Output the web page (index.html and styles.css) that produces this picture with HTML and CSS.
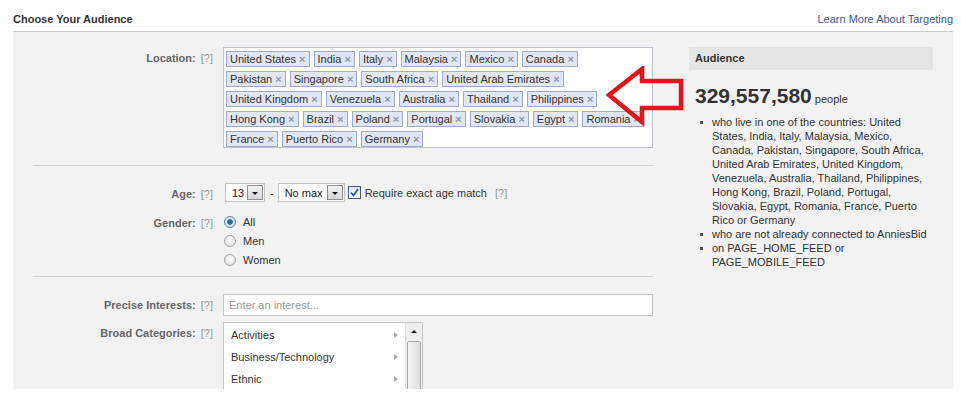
FILE: index.html
```html
<!DOCTYPE html>
<html lang="en">
<head>
  <meta charset="UTF-8" />
  <title>Choose Your Audience</title>
  <link rel="stylesheet" href="styles.css">
</head>
<body>
  <div class="page">
    <div class="title-bar">
      <h2>Choose Your Audience</h2>
      <a class="learn-link" href="#">Learn More About Targeting</a>
    </div>

    <div class="panel">
      <div class="form-col">
        <div class="row">
          <div class="label label-top">Location: <span class="help">[?]</span></div>
          <div class="token-box">
            <div class="tag-row">
              <span class="tag">United States <i>&#215;</i></span>
              <span class="tag">India <i>&#215;</i></span>
              <span class="tag">Italy <i>&#215;</i></span>
              <span class="tag">Malaysia <i>&#215;</i></span>
              <span class="tag">Mexico <i>&#215;</i></span>
              <span class="tag">Canada <i>&#215;</i></span>
            </div>
            <div class="tag-row">
              <span class="tag">Pakistan <i>&#215;</i></span>
              <span class="tag">Singapore <i>&#215;</i></span>
              <span class="tag">South Africa <i>&#215;</i></span>
              <span class="tag">United Arab Emirates <i>&#215;</i></span>
            </div>
            <div class="tag-row">
              <span class="tag">United Kingdom <i>&#215;</i></span>
              <span class="tag">Venezuela <i>&#215;</i></span>
              <span class="tag">Australia <i>&#215;</i></span>
              <span class="tag">Thailand <i>&#215;</i></span>
              <span class="tag">Philippines <i>&#215;</i></span>
            </div>
            <div class="tag-row">
              <span class="tag">Hong Kong <i>&#215;</i></span>
              <span class="tag">Brazil <i>&#215;</i></span>
              <span class="tag">Poland <i>&#215;</i></span>
              <span class="tag">Portugal <i>&#215;</i></span>
              <span class="tag">Slovakia <i>&#215;</i></span>
              <span class="tag">Egypt <i>&#215;</i></span>
              <span class="tag">Romania <i>&#215;</i></span>
            </div>
            <div class="tag-row">
              <span class="tag">France <i>&#215;</i></span>
              <span class="tag">Puerto Rico <i>&#215;</i></span>
              <span class="tag">Germany <i>&#215;</i></span>
            </div>
          </div>
        </div>

        <div class="divider"></div>

        <div class="row row-age">
          <div class="label">Age: <span class="help">[?]</span></div>
          <div class="age-controls">
            <span class="select select-min">13 <b class="drop"></b></span>
            <span class="dash">-</span>
            <span class="select select-max">No max <b class="drop"></b></span>
            <span class="checkbox">
              <svg width="9" height="9" viewBox="0 0 9 9"><path d="M1 4.5 L3.5 7.5 L8 1" fill="none" stroke="#2a5db0" stroke-width="1.8"/></svg>
            </span>
            <span class="check-text">Require exact age match</span>
            <span class="help help-inline">[?]</span>
          </div>
        </div>

        <div class="row row-gender">
          <div class="label">Gender: <span class="help">[?]</span></div>
          <div class="radios">
            <div class="radio-line"><span class="radio checked"></span>All</div>
            <div class="radio-line"><span class="radio"></span>Men</div>
            <div class="radio-line"><span class="radio"></span>Women</div>
          </div>
        </div>

        <div class="divider divider-low"></div>

        <div class="row row-interest">
          <div class="label">Precise Interests: <span class="help">[?]</span></div>
          <div class="text-input">Enter an interest...</div>
        </div>

        <div class="row row-broad">
          <div class="label">Broad Categories: <span class="help">[?]</span></div>
          <div class="listbox">
            <div class="list-items">
              <div class="list-item">Activities <span class="caret"></span></div>
              <div class="list-item">Business/Technology <span class="caret"></span></div>
              <div class="list-item">Ethnic <span class="caret"></span></div>
            </div>
            <div class="scrollbar">
              <div class="scroll-up"></div>
              <div class="scroll-thumb"></div>
            </div>
          </div>
        </div>
      </div>

      <div class="side-col">
        <div class="side-head">Audience</div>
        <div class="count"><strong>329,557,580</strong> people</div>
        <ul class="criteria">
          <li>who live in one of the countries: United States, India, Italy, Malaysia, Mexico, Canada, Pakistan, Singapore, South Africa, United Arab Emirates, United Kingdom, Venezuela, Australia, Thailand, Philippines, Hong Kong, Brazil, Poland, Portugal, Slovakia, Egypt, Romania, France, Puerto Rico or Germany</li>
          <li>who are not already connected to AnniesBid</li>
          <li>on PAGE_HOME_FEED or PAGE_MOBILE_FEED</li>
        </ul>
      </div>

      <svg class="red-arrow" width="80" height="62" viewBox="0 0 80 62">
        <polygon points="3,29 36,3 36,15 75,15 75,42 36,42 36,56" fill="none" stroke="#e3141b" stroke-width="4.5" stroke-linejoin="miter"/>
      </svg>
    </div>
  </div>
</body>
</html>
```

FILE: styles.css
```css
* {
  box-sizing: border-box;
  margin: 0;
  padding: 0;
}

body {
  background: #fff;
  font-family: "Liberation Sans", Arial, sans-serif;
  font-size: 11px;
  color: #333;
}

.page {
  width: 940px;
  margin-left: 13px;
}

.title-bar {
  display: flex;
  justify-content: space-between;
  align-items: flex-end;
  height: 32px;
  padding-bottom: 6px;
  border-bottom: 1px solid #c9c9c9;
}

.title-bar h2 {
  font-size: 11px;
  font-weight: bold;
  color: #333;
}

.learn-link {
  color: #3b5998;
  text-decoration: none;
}

.panel {
  position: relative;
  display: flex;
  gap: 36px;
  height: 357px;
  overflow: hidden;
  background: #f2f2f2;
  padding: 15px 20px 0 20px;
}

.form-col {
  width: 620px;
  flex-shrink: 0;
}

.row {
  display: grid;
  grid-template-columns: 180px 430px;
  column-gap: 10px;
}

.label {
  text-align: right;
  font-weight: bold;
  color: #666;
  line-height: 14px;
}

.label-top {
  padding-top: 4px;
}

.help {
  font-weight: normal;
  color: #999;
  margin-left: 2px;
}

/* location tokens */
.token-box {
  display: flex;
  flex-direction: column;
  gap: 4px;
  height: 101px;
  background: #fff;
  border: 1px solid #bdc2cc;
  padding: 3px 2px 0 2px;
}

.tag-row {
  display: flex;
  gap: 4px;
  white-space: nowrap;
}

.tag {
  display: inline-block;
  height: 16px;
  line-height: 14px;
  padding: 0 3px 0 3px;
  background: #e2e6f0;
  border: 1px solid #9dacce;
  color: #333;
  white-space: nowrap;
}

.tag i {
  font-style: normal;
  font-weight: bold;
  color: #8a98b6;
}

.divider {
  height: 1px;
  background: #d4d4d4;
  margin: 17px 0 17px 0;
}

.divider-low {
  margin: 9px 0 17px 0;
}

/* age */
.row-age .label {
  padding-top: 4px;
}

.age-controls {
  display: flex;
  align-items: center;
  height: 19px;
  padding-left: 2px;
}

.select {
  display: inline-flex;
  align-items: center;
  justify-content: space-between;
  height: 19px;
  background: #fff;
  border: 1px solid #c4c4c4;
  padding: 0 1px 0 6px;
  color: #222;
}

.select-min {
  width: 40px;
}

.select-max {
  width: 67px;
}

.drop {
  position: relative;
  width: 16px;
  height: 15px;
  border: 1px solid #8f8f8f;
  background: linear-gradient(#f4f4f4, #d6d6d6);
}

.drop::after {
  content: "";
  position: absolute;
  left: 4px;
  top: 6px;
  border-left: 3px solid transparent;
  border-right: 3px solid transparent;
  border-top: 3px solid #111;
}

.dash {
  margin: 0 4px 0 5px;
  color: #444;
}

.checkbox {
  display: inline-flex;
  align-items: center;
  justify-content: center;
  width: 13px;
  height: 13px;
  margin-left: 3px;
  border: 1px solid #3c5c88;
  background: linear-gradient(#e4e8ef, #fafafa);
}

.check-text {
  margin-left: 4px;
  color: #333;
}

.help-inline {
  margin-left: 8px;
}

/* gender */
.row-gender {
  margin-top: 13px;
}

.row-gender .label {
  padding-top: 1px;
}

.radios {
  display: flex;
  flex-direction: column;
  gap: 5px;
  padding-left: 1px;
}

.radio-line {
  display: flex;
  align-items: center;
  height: 14px;
  color: #333;
}

.radio {
  width: 12px;
  height: 12px;
  margin-right: 7px;
  border-radius: 50%;
  border: 1px solid #a4a4a4;
  background: radial-gradient(circle at 50% 40%, #fdfdfd, #dcdcdc);
}

.radio.checked {
  border-color: #5b7fa8;
  background: radial-gradient(circle, #1d5aa5 0, #2c6fbf 2.5px, #e9eef4 3.2px, #cfd6de 100%);
}

/* interests */
.row-interest .label {
  padding-top: 4px;
}

.text-input {
  height: 22px;
  line-height: 20px;
  padding-left: 5px;
  background: #fff;
  border: 1px solid #c4c4c4;
  color: #999;
}

.row-broad {
  margin-top: 6px;
}

.row-broad .label {
  padding-top: 4px;
}

.listbox {
  display: flex;
  width: 200px;
  height: 120px;
  background: #fff;
  border: 1px solid #c4c4c4;
}

.list-items {
  flex: 1;
  padding-top: 1px;
}

.list-item {
  display: flex;
  justify-content: space-between;
  align-items: center;
  height: 22px;
  padding: 0 7px 0 7px;
  color: #333;
}

.caret {
  border-top: 3px solid transparent;
  border-bottom: 3px solid transparent;
  border-left: 4px solid #aaa;
}

.scrollbar {
  width: 17px;
  background: #eeeeee;
  border-left: 1px solid #e2e2e2;
}

.scroll-up {
  position: relative;
  height: 18px;
}

.scroll-up::after {
  content: "";
  position: absolute;
  left: 5px;
  top: 7px;
  border-left: 3px solid transparent;
  border-right: 3px solid transparent;
  border-bottom: 3px solid #222;
}

.scroll-thumb {
  height: 80px;
  margin: 0 1px;
  border: 1px solid #a8a8a8;
  border-radius: 2px;
  background: linear-gradient(90deg, #f6f6f6, #dedede);
}

/* audience panel */
.side-col {
  width: 244px;
}

.side-head {
  height: 23px;
  line-height: 23px;
  padding-left: 6px;
  background: #e5e5e5;
  font-weight: bold;
  color: #333;
}

.count {
  margin-top: 14px;
  padding-left: 6px;
  color: #333;
}

.count strong {
  font-size: 21px;
  font-weight: bold;
}

.criteria {
  list-style: none;
  margin-top: 7px;
  padding-left: 23px;
  padding-right: 6px;
}

.criteria li {
  position: relative;
  line-height: 14px;
  color: #333;
}

.criteria li::before {
  content: "";
  position: absolute;
  left: -12px;
  top: 6px;
  width: 3px;
  height: 3px;
  background: #555;
}

.red-arrow {
  position: absolute;
  left: 593px;
  top: 34px;
}
```
